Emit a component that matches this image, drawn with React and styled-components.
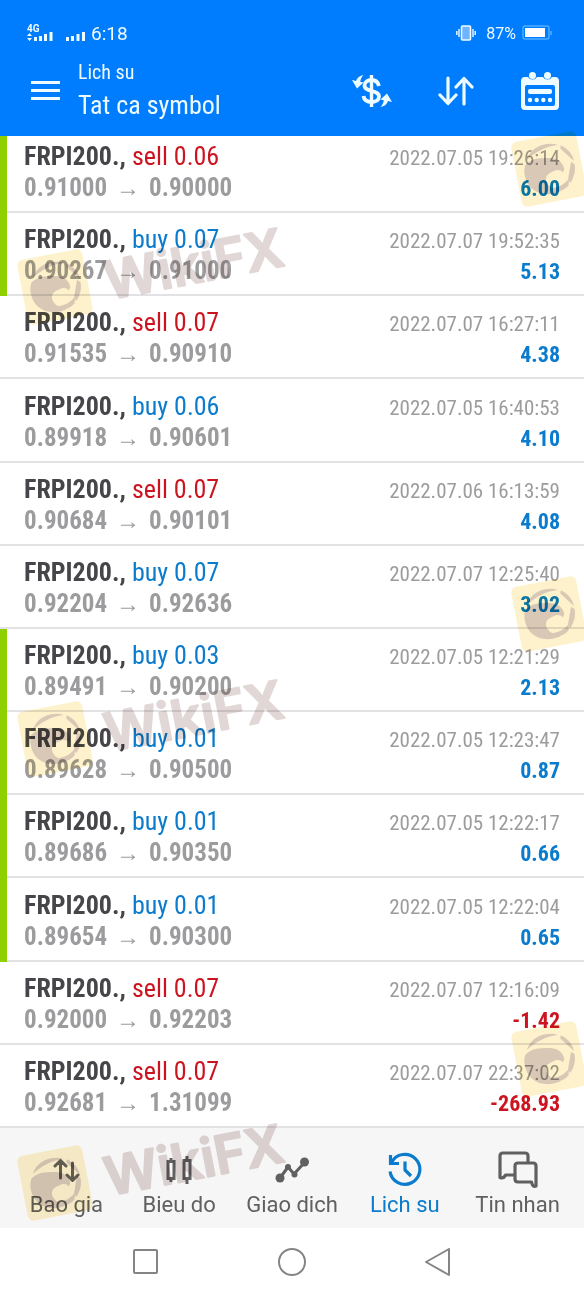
import styled, { createGlobalStyle } from 'styled-components'

const colors = {
  header: '#007dff',
  buy: '#0a7bcd',
  sell: '#cc1420',
  mark: '#8fd000',
  symbol: '#46464a',
  muted: '#9c9c9e',
  line: '#e2e2e4',
  tabs: '#f6f6f6',
  tab: '#606062',
}

const condensed = `'Roboto Condensed', 'Liberation Sans Narrow', Roboto, sans-serif`

const GlobalStyle = createGlobalStyle`
  * {
    box-sizing: border-box;
  }
  body {
    margin: 0;
    background: #fff;
    font-family: Roboto, sans-serif;
  }
  button {
    border: 0;
    padding: 0;
    background: none;
    color: inherit;
    font: inherit;
    cursor: pointer;
  }
  svg {
    display: block;
  }
`

const Page = styled.div`
  position: relative;
  display: flex;
  flex-direction: column;
  min-height: 100vh;
  overflow: hidden;
`

const Header = styled.header`
  background: ${colors.header};
  color: #effcff;
`

const StatusBar = styled.div`
  display: flex;
  align-items: center;
  height: 56px;
  padding: 10px 32px 0 27px;
  font-size: 19px;
`

const Battery = styled.span`
  margin-left: auto;
  display: flex;
  align-items: center;
  gap: 6px;
  font-size: 16px;
`

const Percent = styled.span`
  margin-left: 4px;
`

const Signal = styled.span`
  margin-right: 6px;
`

const Toolbar = styled.div`
  display: flex;
  align-items: center;
  height: 80px;
  padding: 0 24px 10px 31px;
`

const Titles = styled.div`
  margin-left: 18px;
  margin-right: auto;
  font-family: ${condensed};
`

const Caption = styled.div`
  font-size: 20px;
  line-height: 28px;
`

const Title = styled.h1`
  margin: 0;
  font-size: 26px;
  line-height: 38px;
  font-weight: 400;
`

const Actions = styled.div`
  display: flex;
  align-items: center;
  gap: 46px;
`

const List = styled.ul`
  flex: 1;
  display: grid;
  grid-template-rows: 77px repeat(11, 1fr);
  margin: 0;
  padding: 0;
  list-style: none;
  font-family: ${condensed};
`

const Row = styled.li`
  display: flex;
  &::before {
    content: '';
    width: 7px;
    background: ${({ $marked }) => ($marked ? colors.mark : 'transparent')};
    border-bottom: ${({ $marked }) => ($marked ? '0' : `2px solid ${colors.line}`)};
  }
`

const RowBody = styled.div`
  flex: 1;
  display: grid;
  grid-template-columns: 1fr auto;
  align-content: end;
  align-items: baseline;
  padding: 0 24px 7px 17px;
  border-bottom: 2px solid ${colors.line};
  line-height: 30px;
`

const Symbol = styled.div`
  color: ${colors.symbol};
  font-size: 26px;
  font-weight: 700;
`

const Side = styled.span`
  color: ${({ $side }) => colors[$side]};
  font-weight: 400;
`

const Prices = styled.div`
  display: flex;
  gap: 9px;
  color: ${colors.muted};
  font-size: 25px;
  font-weight: 700;
`

const Arrow = styled.span`
  font-family: 'Liberation Sans', sans-serif;
  font-size: 24px;
  font-weight: 400;
`

const Time = styled.div`
  color: ${colors.muted};
  font-size: 21px;
`

const Profit = styled.div`
  color: ${({ $loss }) => ($loss ? colors.sell : colors.buy)};
  font-size: 22px;
  font-weight: 700;
  text-align: right;
`

const Tabs = styled.nav`
  display: grid;
  grid-template-columns: repeat(5, 1fr);
  height: 100px;
  padding: 0 10px;
  background: ${colors.tabs};
`

const Tab = styled.button`
  && {
    display: flex;
    flex-direction: column;
    align-items: center;
    justify-content: flex-end;
    gap: 2px;
    padding-bottom: 8px;
    color: ${({ $active }) => ($active ? colors.buy : colors.tab)};
    font-size: 22px;
    line-height: 30px;
    white-space: nowrap;
  }
`

const SystemBar = styled.div`
  display: flex;
  align-items: center;
  justify-content: center;
  gap: 118px;
  height: 68px;
  color: #858585;
`

const Watermarks = styled.div`
  position: absolute;
  inset: 0;
  overflow: hidden;
  pointer-events: none;
  mix-blend-mode: multiply;
`

const Stamp = styled.svg`
  position: absolute;
  top: ${({ $top }) => $top}px;
  left: ${({ $left }) => $left};
  overflow: visible;
`

const deals = [
  ['sell', '0.06', '0.91000', '0.90000', '2022.07.05 19:26:14', '6.00', true],
  ['buy', '0.07', '0.90267', '0.91000', '2022.07.07 19:52:35', '5.13', true],
  ['sell', '0.07', '0.91535', '0.90910', '2022.07.07 16:27:11', '4.38', false],
  ['buy', '0.06', '0.89918', '0.90601', '2022.07.05 16:40:53', '4.10', false],
  ['sell', '0.07', '0.90684', '0.90101', '2022.07.06 16:13:59', '4.08', false],
  ['buy', '0.07', '0.92204', '0.92636', '2022.07.07 12:25:40', '3.02', false],
  ['buy', '0.03', '0.89491', '0.90200', '2022.07.05 12:21:29', '2.13', true],
  ['buy', '0.01', '0.89628', '0.90500', '2022.07.05 12:23:47', '0.87', true],
  ['buy', '0.01', '0.89686', '0.90350', '2022.07.05 12:22:17', '0.66', true],
  ['buy', '0.01', '0.89654', '0.90300', '2022.07.05 12:22:04', '0.65', true],
  ['sell', '0.07', '0.92000', '0.92203', '2022.07.07 12:16:09', '-1.42', false],
  ['sell', '0.07', '0.92681', '1.31099', '2022.07.07 22:37:02', '-268.93', false],
]

function SignalIcon() {
  return (
    <svg width="58" height="18" viewBox="0 0 58 18" fill="currentColor">
      <text x="0" y="8" fontSize="10" fontWeight="700" fontFamily="Roboto, sans-serif">4G</text>
      <path d="M0 12l2.500-3 2.500 3zM0 14h5l-2.500 3z" />
      <path d="M7 13h3v4H7zM12 12h3v5h-3zM17 10h3v7h-3zM22.500 8h3v9h-3z" />
      <path d="M39 13h3v4h-3zM44 12h3v5h-3zM49.500 10h3v7h-3zM55 8h3v9h-3z" />
    </svg>
  )
}

function VibrateIcon() {
  return (
    <svg width="20" height="16" viewBox="0 0 20 16" fill="none" stroke="currentColor">
      <rect x="5.500" y="1" width="9" height="14" rx="1" fill="#6fb4ff" strokeWidth="1.600" />
      <path d="M3 4v8M17 4v8M.8 6v4M19.200 6v4" strokeWidth="1.400" />
    </svg>
  )
}

function BatteryIcon() {
  return (
    <svg width="30" height="16" viewBox="0 0 30 16">
      <rect x="1" y="1" width="26" height="13" rx="2" fill="none" stroke="#4fb0ff" strokeWidth="1.400" />
      <rect x="3" y="3" width="20" height="9" fill="#fff" />
      <path d="M29 6v4" stroke="#4fb0ff" strokeWidth="1.500" />
    </svg>
  )
}

function MenuIcon() {
  return (
    <svg width="29" height="20" viewBox="0 0 29 20" stroke="currentColor" strokeWidth="3">
      <path d="M0 1.500h29M0 9.500h29M0 17.500h29" />
    </svg>
  )
}

function CurrencyIcon() {
  return (
    <svg width="40" height="34" viewBox="0 0 40 34" fill="none" stroke="currentColor">
      <path d="M19.500 1v32" strokeWidth="3.400" />
      <path d="M27 12c-1-4-4-6-7.500-6-4 0-7 2-7 5.500 0 7 14.500 4 14.500 11 0 3.500-3 5.500-7 5.500-4.500 0-8-2-8.500-6" strokeWidth="3.800" />
      <path d="M11.500 1C8 1.500 5 3.500 4 7L0 6l5 8.500 6.500-6-3.300-.8C8.500 5.200 9.500 3 11.500 1z" fill="currentColor" stroke="none" />
      <path d="M28.500 33c3.500-.5 6.500-2.500 7.500-6l4 1-5-8.500-6.500 6 3.300.8c-.3 2.500-1.300 4.700-3.300 6.700z" fill="currentColor" stroke="none" />
    </svg>
  )
}

function SortIcon() {
  return (
    <svg width="36" height="30" viewBox="0 0 36 30" fill="none" stroke="currentColor" strokeWidth="3.200" strokeLinecap="round" strokeLinejoin="round">
      <path d="M10 2v25M2 19l8 8.500 8-8.500M26 28V2.500M18 11l8-8.500 8 8.500" />
    </svg>
  )
}

function CalendarIcon() {
  return (
    <svg width="40" height="40" viewBox="0 0 40 40">
      <path d="M5 6h3a5 4.500 0 0 0 9 0h6a5 4.500 0 0 0 9 0h3q4 0 4 4v25q0 4-4 4H5q-4 0-4-4V10q0-4 4-4z" fill="currentColor" />
      <rect x="5" y="14" width="30" height="21" rx="2" fill={colors.header} />
      <g fill="currentColor">
        <circle cx="12.500" cy="4.500" r="3.500" />
        <circle cx="27.500" cy="4.500" r="3.500" />
        <rect x="8" y="18" width="24" height="5" rx="2" />
        <circle cx="10" cy="29" r="2.200" />
        <circle cx="16.700" cy="29" r="2.200" />
        <circle cx="23.300" cy="29" r="2.200" />
        <circle cx="30" cy="29" r="2.200" />
      </g>
    </svg>
  )
}

function QuotesIcon() {
  return (
    <svg width="28" height="36" viewBox="0 0 28 36" fill="none" stroke="currentColor" strokeWidth="3" strokeLinecap="round" strokeLinejoin="round">
      <path d="M8.500 26V9M3 14l5.500-5.500L14 14M20.500 11v17M15 23l5.500 5.500L26 23" />
    </svg>
  )
}

function ChartIcon() {
  return (
    <svg width="28" height="36" viewBox="0 0 28 36" fill="none" stroke="currentColor" strokeWidth="3">
      <path d="M3 9.500h6v17H3zM6 6v4M6 26v4M19 8.500h6v18h-6zM22 4v5M22 26v6" />
    </svg>
  )
}

function TradeIcon() {
  return (
    <svg width="36" height="36" viewBox="0 0 36 36" fill="none" stroke="currentColor">
      <path d="M6 26l8-11 6 7 11-12" strokeWidth="3" />
      <g fill="currentColor" stroke="none">
        <circle cx="6" cy="26" r="4.500" />
        <circle cx="14" cy="15" r="3" />
        <circle cx="20.500" cy="22.500" r="3" />
        <circle cx="30.500" cy="10" r="4.500" />
      </g>
    </svg>
  )
}

function HistoryIcon() {
  return (
    <svg width="36" height="36" viewBox="0 0 36 36" fill="none" stroke="currentColor" strokeWidth="3.200">
      <path d="M3 19.500A15 15 0 1 0 4.500 10.500" />
      <path d="M3.500 3v8.500h8.500" />
      <path d="M18 9.500v8.500l6 6" strokeLinejoin="round" />
    </svg>
  )
}

function MessagesIcon() {
  return (
    <svg width="40" height="37" viewBox="0 0 40 37" fill="none" stroke="currentColor" strokeWidth="3.200" strokeLinejoin="round">
      <path d="M17 24H7.500q-2 4-5.500 2.500V5q0-3 3-3h22q3 0 3 3v7" />
      <path d="M20 12h15q3 0 3 3v20q-3.500 1.500-4.500-4H20q-3 0-3-3V15q0-3 3-3z" />
    </svg>
  )
}

function Eagle() {
  return (
    <g transform="rotate(-11 38 39)">
      <rect x="5" y="6" width="66" height="66" rx="6" fill="#f9d868" opacity="0.340" />
      <g fill="#8c7088" opacity="0.320">
        <path d="M18 26c4-8 12-12 21-12 5 0 9 1 12 3-12-1-24 3-33 9z" />
        <path d="M13 41c0-5 1-8 3-11 5-3 10-4 16-3l7 1c8 1 14 6 14 14l-2 3c-2-3-5-4-9-3-3 1-6 1-8 4-3 5 0 12 11 17-18 4-32-6-32-22z" />
        <path d="M54 18c6 4 10 11 10 18L53 21z" />
        <path d="M64 39c0 7-3 13-8 18l-1-5 6-16z" />
        <path d="M54 59c-4 3-8 4-13 4-4-1-7-3-9-6 8 3 16 2 24-5z" />
      </g>
    </g>
  )
}

function BrandStamp({ top }) {
  return (
    <Stamp $top={top} $left="17px" width="300" height="120" viewBox="0 0 300 120" aria-hidden="true">
      <g transform="translate(0 24)">
        <Eagle />
      </g>
      <text
        x="91"
        y="74"
        transform="rotate(-11 102 74)"
        opacity="0.280"
        fontFamily="Inter, sans-serif"
        fontSize="53"
        fontWeight="600"
        fill="#92706c"
        stroke="#92706c"
        strokeWidth="2"
        strokeLinejoin="round"
      >
        WikiFX
      </text>
    </Stamp>
  )
}

function LogoStamp({ top }) {
  return (
    <Stamp $top={top} $left="calc(100% - 73px)" width="78" height="78" viewBox="0 0 78 78" aria-hidden="true">
      <Eagle />
    </Stamp>
  )
}

function Deal({ deal }) {
  const [side, volume, open, close, time, profit, marked] = deal
  return (
    <Row $marked={marked}>
      <RowBody>
        <Symbol>
          FRPI200., <Side $side={side}>{side} {volume}</Side>
        </Symbol>
        <Time>{time}</Time>
        <Prices>
          {open}
          <Arrow>→</Arrow>
          {close}
        </Prices>
        <Profit $loss={profit.startsWith('-')}>{profit}</Profit>
      </RowBody>
    </Row>
  )
}

function App() {
  return (
    <Page>
      <GlobalStyle />
      <Header>
        <StatusBar>
          <Signal><SignalIcon /></Signal>
          6:18
          <Battery>
            <VibrateIcon />
            <Percent>87%</Percent>
            <BatteryIcon />
          </Battery>
        </StatusBar>
        <Toolbar>
          <button aria-label="Menu"><MenuIcon /></button>
          <Titles>
            <Caption>Lich su</Caption>
            <Title>Tat ca symbol</Title>
          </Titles>
          <Actions>
            <button aria-label="Symbol"><CurrencyIcon /></button>
            <button aria-label="Sort"><SortIcon /></button>
            <button aria-label="Period"><CalendarIcon /></button>
          </Actions>
        </Toolbar>
      </Header>
      <List>
        {deals.map((deal) => (
          <Deal key={deal[4]} deal={deal} />
        ))}
      </List>
      <Tabs>
        <Tab><QuotesIcon />Bao gia</Tab>
        <Tab><ChartIcon />Bieu do</Tab>
        <Tab><TradeIcon />Giao dich</Tab>
        <Tab $active><HistoryIcon />Lich su</Tab>
        <Tab><MessagesIcon />Tin nhan</Tab>
      </Tabs>
      <SystemBar>
        <button aria-label="Recent apps">
          <svg width="28" height="28" viewBox="0 0 28 28" fill="none" stroke="currentColor" strokeWidth="2">
            <rect x="2" y="2" width="23" height="23" rx="1" />
          </svg>
        </button>
        <button aria-label="Home">
          <svg width="28" height="28" viewBox="0 0 28 28" fill="none" stroke="currentColor" strokeWidth="2">
            <circle cx="14" cy="14" r="13" />
          </svg>
        </button>
        <button aria-label="Back">
          <svg width="28" height="28" viewBox="0 0 28 28" fill="none" stroke="currentColor" strokeWidth="2" strokeLinejoin="round">
            <path d="M25 1v26L2 14z" />
          </svg>
        </button>
      </SystemBar>
      <Watermarks>
        <BrandStamp top={224} />
        <BrandStamp top={676} />
        <BrandStamp top={1120} />
        <LogoStamp top={130} />
        <LogoStamp top={575} />
        <LogoStamp top={1020} />
      </Watermarks>
    </Page>
  )
}

export default App
